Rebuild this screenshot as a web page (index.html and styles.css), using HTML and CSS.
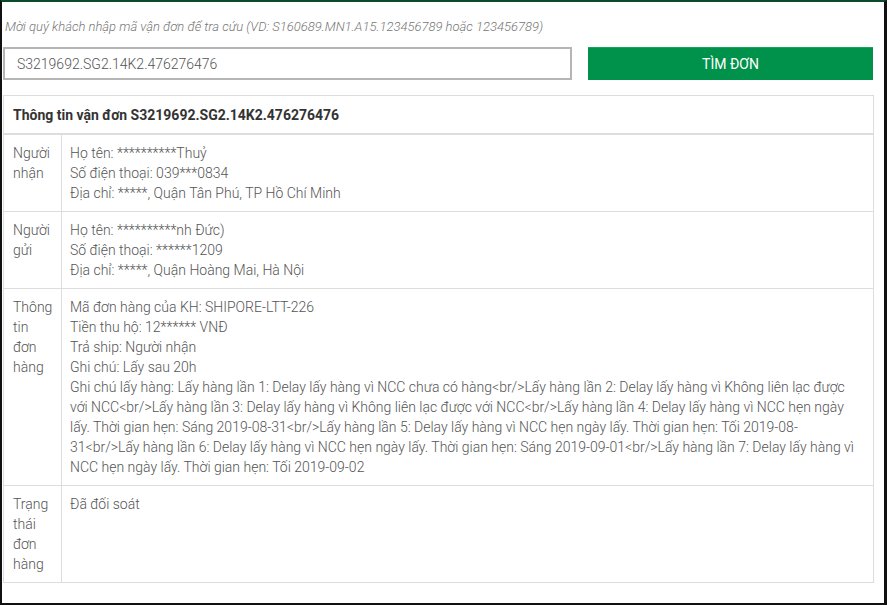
FILE: index.html
```html
<!DOCTYPE html>
<html lang="vi">
<head>
    <meta charset="UTF-8">
    <meta name="viewport" content="width=device-width, initial-scale=1.0">
    <title>Tra cứu vận đơn</title>
    <link rel="stylesheet" href="styles.css">
</head>
<body>
    <div class="frame">
        <p class="hint">Mời quý khách nhập mã vận đơn để tra cứu (VD: S160689.MN1.A15.123456789 hoặc 123456789)</p>

        <form class="search-row" onsubmit="return false">
            <input type="text" class="search-input" value="S3219692.SG2.14K2.476276476">
            <button type="submit" class="search-btn">TÌM ĐƠN</button>
        </form>

        <table class="order-table">
            <thead>
                <tr>
                    <th colspan="2">Thông tin vận đơn S3219692.SG2.14K2.476276476</th>
                </tr>
            </thead>
            <tbody>
                <!-- Người nhận -->
                <tr>
                    <td class="label">Người nhận</td>
                    <td>
                        Họ tên: **********Thuỷ<br>
                        Số điện thoại: 039***0834<br>
                        Địa chỉ: *****, Quận Tân Phú, TP Hồ Chí Minh
                    </td>
                </tr>
                <!-- Người gửi -->
                <tr>
                    <td class="label">Người gửi</td>
                    <td>
                        Họ tên: **********nh Đức)<br>
                        Số điện thoại: ******1209<br>
                        Địa chỉ: *****, Quận Hoàng Mai, Hà Nội
                    </td>
                </tr>
                <!-- Thông tin đơn hàng -->
                <tr>
                    <td class="label">Thông tin đơn hàng</td>
                    <td>
                        Mã đơn hàng của KH: SHIPORE-LTT-226<br>
                        Tiền thu hộ: 12****** VNĐ<br>
                        Trả ship: Người nhận<br>
                        Ghi chú: Lấy sau 20h<br>
                        Ghi chú lấy hàng: Lấy hàng lần 1: Delay lấy hàng vì NCC chưa có hàng&lt;br/&gt;Lấy hàng lần 2: Delay lấy hàng vì Không liên lạc được với NCC&lt;br/&gt;Lấy hàng lần 3: Delay lấy hàng vì Không liên lạc được với NCC&lt;br/&gt;Lấy hàng lần 4: Delay lấy hàng vì NCC hẹn ngày lấy. Thời gian hẹn: Sáng 2019-08-31&lt;br/&gt;Lấy hàng lần 5: Delay lấy hàng vì NCC hẹn ngày lấy. Thời gian hẹn: Tối 2019-08-31&lt;br/&gt;Lấy hàng lần 6: Delay lấy hàng vì NCC hẹn ngày lấy. Thời gian hẹn: Sáng 2019-09-01&lt;br/&gt;Lấy hàng lần 7: Delay lấy hàng vì NCC hẹn ngày lấy. Thời gian hẹn: Tối 2019-09-02
                    </td>
                </tr>
                <!-- Trạng thái -->
                <tr>
                    <td class="label">Trạng thái đơn hàng</td>
                    <td>Đã đối soát</td>
                </tr>
            </tbody>
        </table>
    </div>
</body>
</html>
```

FILE: styles.css
```css
html, body {
    margin: 0;
    padding: 0;
    background-color: white;
}
body {
    font-family: Roboto, "Liberation Sans", Arial, sans-serif;
    font-weight: 300;
    color: #555;
}
.frame {
    box-sizing: border-box;
    height: 605px;
    width: 887px;
    border-top: 2px solid #0b4a2c;
    border-left: 2px solid #111;
    border-right: 3px solid #111;
    border-bottom: 2px solid #111;
    padding: 15px 10px 0 1px;
}
.hint {
    margin: 0 0 10px 2px;
    font-size: 13px;
    line-height: 20px;
    font-style: italic;
    color: #777;
}
.search-row {
    display: flex;
    gap: 16px;
    margin: 0 0 15px 0;
}
.search-input {
    flex: 1;
    height: 33px;
    box-sizing: border-box;
    border: 2px solid #b5b5b5;
    padding: 0 12px;
    font-family: Roboto, "Liberation Sans", Arial, sans-serif;
    font-weight: 300;
    font-size: 14px;
    color: #555;
    outline: none;
}
.search-btn {
    width: 285px;
    height: 33px;
    margin-right: 1px;
    border: none;
    border-top: 1px solid #17a558;
    background-color: #00924a;
    color: white;
    font-family: Roboto, "Liberation Sans", Arial, sans-serif;
    font-weight: 400;
    font-size: 14px;
    cursor: pointer;
}
.order-table {
    width: 100%;
    border-collapse: collapse;
    font-size: 14px;
    line-height: 20px;
}
.order-table th {
    text-align: left;
    font-weight: bold;
    color: #333;
    padding: 9px 9px 8px 9px;
    border: 1px solid #ddd;
    border-bottom: 2px solid #ddd;
}
.order-table td {
    vertical-align: top;
    padding: 8px 8px;
    border: 1px solid #ddd;
}
.order-table td.label {
    width: 40px;
    padding-left: 9px;
}
```
